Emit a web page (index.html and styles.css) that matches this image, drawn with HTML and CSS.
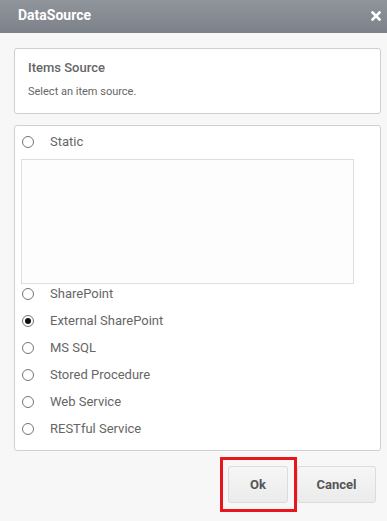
FILE: index.html
```html
<!DOCTYPE html>
<html>
<head>
<meta charset="utf-8">
<link rel="stylesheet" href="styles.css">
</head>
<body>
<div class="dialog">
  <div class="header">
    <span class="title">DataSource</span>
    <svg class="close" width="10" height="10" viewBox="0 0 10 10"><path d="M1.5 1.5 L8.5 8.5 M8.5 1.5 L1.5 8.5" stroke="#fff" stroke-width="2.6" stroke-linecap="square"/></svg>
  </div>
  <div class="content">
    <div class="card info">
      <div class="info-title">Items Source</div>
      <div class="info-text">Select an item source.</div>
    </div>
    <div class="card options">
      <label class="opt"><span class="radio"></span><span class="lbl">Static</span></label>
      <div class="textarea"></div>
      <label class="opt"><span class="radio"></span><span class="lbl">SharePoint</span></label>
      <label class="opt"><span class="radio checked"></span><span class="lbl">External SharePoint</span></label>
      <label class="opt"><span class="radio"></span><span class="lbl">MS SQL</span></label>
      <label class="opt"><span class="radio"></span><span class="lbl">Stored Procedure</span></label>
      <label class="opt"><span class="radio"></span><span class="lbl">Web Service</span></label>
      <label class="opt last"><span class="radio"></span><span class="lbl">RESTful Service</span></label>
    </div>
    <div class="buttons">
      <button class="btn highlighted">Ok</button>
      <button class="btn cancel">Cancel</button>
    </div>
  </div>
</div>
</body>
</html>
```
FILE: styles.css
```css
* { box-sizing: border-box; }
html, body { margin: 0; padding: 0; }
body {
  background: #f7f7f7;
  font-family: Roboto, "Liberation Sans", sans-serif;
  width: 387px;
  height: 521px;
  overflow: hidden;
}
.header {
  height: 33px;
  background: linear-gradient(#90949b, #7d8189);
  display: flex;
  align-items: center;
  justify-content: space-between;
  padding: 0 6px 3px 18px;
}
.title {
  color: #fff;
  font-weight: 700;
  font-size: 14px;
}
.close { margin-top: 1px; }
.content {
  padding: 15px 6px 0 14px;
}
.card {
  background: #fff;
  border: 1px solid #cfcfcf;
  border-radius: 3px;
}
.info {
  height: 66px;
  padding: 11px 13px 0;
}
.info-title {
  font-size: 13px;
  font-weight: 500;
  color: #666;
  line-height: 16px;
}
.info-text {
  font-size: 11px;
  color: #666;
  margin-top: 9px;
  line-height: 14px;
}
.options {
  margin-top: 11px;
  padding: 6px 0 11px;
  display: flex;
  flex-direction: column;
}
.opt {
  height: 20px;
  display: flex;
  align-items: center;
  margin-bottom: 7px;
  padding-left: 7px;
}
.opt.last { margin-bottom: 0; }
.radio {
  width: 12px;
  height: 12px;
  border: 1px solid #757575;
  border-radius: 50%;
  display: flex;
  align-items: center;
  justify-content: center;
  flex-shrink: 0;
}
.radio.checked::after {
  content: "";
  width: 6px;
  height: 6px;
  border-radius: 50%;
  background: #111;
}
.lbl {
  margin-left: 16px;
  font-size: 13px;
  line-height: 18px;
  margin-bottom: 1px;
  color: #666;
}
.textarea {
  margin-left: 6px;
  width: 333px;
  height: 125px;
  border: 1px solid #dedede;
  background: #fdfdfd;
}
.buttons {
  display: flex;
  justify-content: flex-end;
  gap: 9px;
  margin-top: 15px;
  padding-right: 5px;
}
.btn {
  height: 37px;
  border: 1px solid #dcdcdc;
  border-radius: 3px;
  background: linear-gradient(#f6f6f6, #ebebeb);
  font-family: Roboto, "Liberation Sans", sans-serif;
  font-weight: 700;
  font-size: 13px;
  color: #555;
  padding: 0;
}
.highlighted { width: 60px; position: relative; }
.highlighted::after {
  content: "";
  position: absolute;
  top: -10px;
  bottom: -10px;
  left: -9px;
  right: -10px;
  border: 3px solid #e8151f;
}
.cancel { width: 79px; }
```
